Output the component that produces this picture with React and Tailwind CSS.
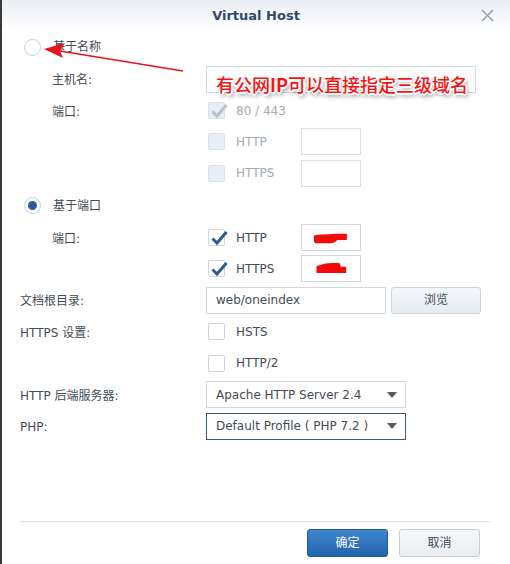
import React from "react"

const labelCls = "text-[12px] text-[#444c55]"

function Check({ checked, disabled }) {
  return (
    <span
      className={
        "relative flex h-[17px] w-[17px] shrink-0 items-center justify-center rounded-[2px] border " +
        (disabled ? "border-[#dbe1e8] bg-[#e9eef4]" : "border-[#cfd5dc] bg-white")
      }
    >
      {checked && (
        <svg className="absolute left-[1px] top-[-1px]" width="18" height="17" viewBox="0 0 18 17">
          <path
            d="M2.5 9.5 L7 14 L16.5 3"
            fill="none"
            stroke={disabled ? "#b3c1d0" : "#2b5c94"}
            strokeWidth="3"
            strokeLinecap="butt"
          />
        </svg>
      )}
    </span>
  )
}

function Radio({ checked }) {
  return (
    <span className="flex h-[17px] w-[17px] shrink-0 items-center justify-center rounded-full border border-[#c8ced5] bg-white">
      {checked && <span className="h-[9px] w-[9px] rounded-full bg-[#2a5c99]" />}
    </span>
  )
}

function Input({ className = "", children }) {
  return (
    <div className={"flex h-[27px] items-center border border-[#d3d9df] bg-white px-[9px] text-[12px] text-[#444c55] " + className}>
      {children}
    </div>
  )
}

function Select({ value, focused }) {
  return (
    <div
      className={
        "flex h-[27px] w-[200px] items-center justify-between border bg-white pl-[9px] pr-[8px] text-[12px] text-[#444c55] " +
        (focused ? "border-[#3d5878]" : "border-[#d3d9df]")
      }
    >
      <span>{value}</span>
      <svg width="10" height="6" viewBox="0 0 10 6">
        <path d="M0 0 L10 0 L5 6 Z" fill="#555b62" />
      </svg>
    </div>
  )
}

function Row({ h, label, indent, children }) {
  return (
    <div className={"flex items-center " + h}>
      <div className={"shrink-0 " + (indent ? "w-[186px] pl-[32px]" : "w-[186px]")}>
        {label && <span className={labelCls}>{label}</span>}
      </div>
      <div className="flex items-center">{children}</div>
    </div>
  )
}

function CheckOpt({ checked, disabled, text, children }) {
  return (
    <div className="flex items-center">
      <div className="flex w-[95px] items-center pl-[2px]">
        <Check checked={checked} disabled={disabled} />
        <span className={"ml-[11px] text-[12px] " + (disabled ? "text-[#a3abb4]" : "text-[#444c55]")}>{text}</span>
      </div>
      {children}
    </div>
  )
}

// red marker blots hiding the port numbers
function Scribble({ variant }) {
  return (
    <svg width="58" height="25" viewBox="0 0 58 25">
      {variant === 1 ? (
        <path d="M4 10 C8 8 14 8 20 8 L36 7 L52 7 L52 16 L38 16 C36 19 32 21 24 21 L6 21 C4 19 4 15 4 10 Z" fill="#f50a0a" />
      ) : (
        <path d="M8 9 C12 8 16 7 18 6 C24 5 36 4 42 5 L43 10 L51 10 L51 19 L8 19 Z" fill="#f50a0a" />
      )}
    </svg>
  )
}

export default function App() {
  return (
    <div className="relative h-[564px] w-[510px] overflow-hidden border-l-[2px] border-[#3a3a3a] bg-white font-['DejaVu_Sans','Noto_Sans_CJK_SC',sans-serif]">
      {/* header */}
      <div className="grid h-[31px] grid-cols-[1fr_auto_1fr] items-center bg-gradient-to-b from-[#e9eef4] to-white px-[16px]">
        <span />
        <span className="text-[13px] font-bold text-[#2e4a6d]">Virtual Host</span>
        <svg className="justify-self-end" width="13" height="13" viewBox="0 0 13 13">
          <path d="M1 1 L12 12 M12 1 L1 12" stroke="#9aa1a8" strokeWidth="1.6" />
        </svg>
      </div>

      <div className="pl-[18px]">
        <div className="flex h-[32px] items-center pl-[4px]">
          <Radio />
          <span className="ml-[12px] text-[12px] text-[#444c55]">基于名称</span>
        </div>
        <Row h="h-[32px]" label="主机名:" indent>
          <Input className="w-[270px]" />
        </Row>
        <Row h="h-[31px]" label="端口:" indent>
          <CheckOpt checked disabled text="80 / 443" />
        </Row>
        <Row h="h-[31px]">
          <CheckOpt disabled text="HTTP">
            <Input className="w-[60px] border-[#dbe0e5]" />
          </CheckOpt>
        </Row>
        <Row h="h-[32px]">
          <CheckOpt disabled text="HTTPS">
            <Input className="w-[60px] border-[#dbe0e5]" />
          </CheckOpt>
        </Row>

        <div className="flex h-[33px] items-center pl-[4px]">
          <Radio checked />
          <span className="ml-[12px] text-[12px] text-[#444c55]">基于端口</span>
        </div>
        <Row h="h-[31px]" label="端口:" indent>
          <CheckOpt checked text="HTTP">
            <Input className="w-[60px] px-0">
              <Scribble variant={1} />
            </Input>
          </CheckOpt>
        </Row>
        <Row h="h-[31px]">
          <CheckOpt checked text="HTTPS">
            <Input className="w-[60px] px-0">
              <Scribble variant={2} />
            </Input>
          </CheckOpt>
        </Row>
        <Row h="h-[32px]" label="文档根目录:">
          <Input className="w-[180px]">web/oneindex</Input>
          <button className="ml-[5px] h-[27px] w-[90px] rounded-[3px] border border-[#cdd5de] bg-gradient-to-b from-[#f4f7fa] to-[#e6ecf2] text-[12px] text-[#444c55]">
            浏览
          </button>
        </Row>
        <Row h="h-[31px]" label="HTTPS 设置:">
          <CheckOpt text="HSTS" />
        </Row>
        <Row h="h-[32px]">
          <CheckOpt text="HTTP/2" />
        </Row>
        <Row h="h-[31px]" label="HTTP 后端服务器:">
          <Select value="Apache HTTP Server 2.4" />
        </Row>
        <Row h="h-[32px]" label="PHP:">
          <Select value="Default Profile ( PHP 7.2 )" focused />
        </Row>
      </div>

      {/* footer */}
      <div className="absolute bottom-0 left-[18px] right-[20px]">
        <div className="h-px bg-[#dde2e7]" />
        <div className="flex h-[42px] items-center justify-end gap-[11px] pb-[3px] pr-[10px] pt-[2px]">
          <button className="h-[28px] w-[81px] rounded-[3px] border border-[#1e5a9c] bg-gradient-to-b from-[#3f86cc] to-[#2064ae] text-[12px] text-white">
            确定
          </button>
          <button className="h-[28px] w-[81px] rounded-[3px] border border-[#c6cdd5] bg-gradient-to-b from-[#f6f8fa] to-[#e9edf1] text-[12px] text-[#444c55]">
            取消
          </button>
        </div>
      </div>

      {/* annotation arrow */}
      <svg className="absolute left-0 top-0" width="200" height="90" viewBox="0 0 200 90">
        <path d="M181 71 L58 51" stroke="#e8131b" strokeWidth="1.5" />
        <path d="M42 49 L63 43 L58 51 L61 58 Z" fill="#e8131b" />
      </svg>

      {/* annotation text */}
      <div className="absolute left-[214px] top-[71px] font-['Noto_Sans_CJK_SC',sans-serif] text-[18px] font-medium leading-[26px] text-[#f51414] [text-shadow:1px_1px_0_#fff,-1px_-1px_0_#fff,1px_-1px_0_#fff,-1px_1px_0_#fff,0_2px_0_#fff,2px_0_0_#fff,2px_3px_4px_rgba(0,0,0,0.55)]">
        有公网<span className="font-bold">IP</span>可以直接指定三级域名
      </div>
    </div>
  )
}
